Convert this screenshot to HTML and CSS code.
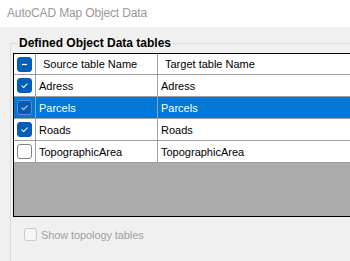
FILE: index.html
```html
<!DOCTYPE html>
<html lang="en">
<head>
  <meta charset="UTF-8">
  <title>AutoCAD Map Object Data</title>
  <link rel="stylesheet" href="styles.css">
</head>
<body>

  <div class="titlebar">AutoCAD Map Object Data</div>

  <fieldset class="group">
    <legend>Defined Object Data tables</legend>

    <div class="grid">
      <table>
        <thead>
          <tr>
            <th class="chk">
              <span class="box on">
                <svg viewBox="0 0 15 15"><path d="M4.5 7.5H10.5"/></svg>
              </span>
            </th>
            <th class="src">Source table Name</th>
            <th>Target table Name</th>
          </tr>
        </thead>
        <tbody>
          <tr>
            <td class="chk"><span class="box on"><svg viewBox="0 0 15 15"><path d="M4.2 7.6L6.5 9.9L10.9 5.3"/></svg></span></td>
            <td>Adress</td>
            <td>Adress</td>
          </tr>
          <tr class="sel">
            <td class="chk"><span class="box on"><svg viewBox="0 0 15 15"><path d="M4.2 7.6L6.5 9.9L10.9 5.3"/></svg></span></td>
            <td>Parcels</td>
            <td>Parcels</td>
          </tr>
          <tr>
            <td class="chk"><span class="box on"><svg viewBox="0 0 15 15"><path d="M4.2 7.6L6.5 9.9L10.9 5.3"/></svg></span></td>
            <td>Roads</td>
            <td>Roads</td>
          </tr>
          <tr>
            <td class="chk"><span class="box off"></span></td>
            <td>TopographicArea</td>
            <td>TopographicArea</td>
          </tr>
        </tbody>
      </table>
    </div>

    <label class="option disabled"><span class="box"></span>Show topology tables</label>
  </fieldset>

</body>
</html>
```

FILE: styles.css
```css
html, body {
  height: 100%;
  margin: 0;
}

body {
  background-color: #f0f0f0;
  font-family: "Liberation Sans", Arial, sans-serif;
  font-size: 11px;
  display: flex;
  flex-direction: column;
  overflow: hidden;
}

.titlebar {
  flex-shrink: 0;
  height: 27px;
  line-height: 27px;
  padding-left: 7px;
  background-color: #fff;
  color: #999;
  font-size: 12px;
  letter-spacing: -0.15px;
}

/* Group box */
.group {
  flex: 1;
  min-width: 0;
  margin: 9px 0 0 10px;
  padding: 3px 0 0 2px;
  border: 1px solid #dcdcdc;
  border-right: none;
  border-bottom: none;
}

.group legend {
  margin-left: 4px;
  padding: 0 2px;
  font-size: 12px;
  font-weight: bold;
  line-height: 14px;
  color: #000;
}

/* Data grid - runs on past the right edge of the window */
.grid {
  height: 162px;
  border: 1px solid #000;
  border-right: none;
  background-color: #ababab;
}

.grid table {
  width: 100%;
  table-layout: fixed;
  border-collapse: separate;
  border-spacing: 0;
}

.grid th, .grid td {
  padding: 0 0 0 3px;
  border-right: 1px solid #a0a0a0;
  border-bottom: 1px solid #a0a0a0;
  background-color: #fff;
  color: #000;
  text-align: left;
  font-weight: normal;
  white-space: nowrap;
}

.grid th:last-child, .grid td:last-child {
  border-right: none;
}

.grid th {
  height: 20px;
  padding-left: 7px;
}

.grid td {
  height: 21px;
}

.grid .chk {
  width: 21px;
  padding: 0;
}

.grid th.src {
  width: 114px;
}

.grid .sel td {
  background-color: #0078d7;
  color: #fff;
}

/* Check boxes */
.box {
  display: block;
  box-sizing: border-box;
  width: 15px;
  height: 15px;
  border-radius: 3px;
}

.grid .box {
  margin: 0 auto;
}

.box svg {
  display: block;
  width: 13px;
  height: 13px;
  fill: none;
  stroke: #fff;
  stroke-width: 1.2;
}

.box.on {
  background-color: #005fb8;
  border: 1px solid #005fb8;
}

.box.on svg path[d^="M4.5"] {
  stroke-width: 1.5;
}

.sel .box.on {
  background-color: #0d5bb0;
  border-color: #4c93dd;
}

.sel .box.on svg {
  stroke: #c9ddf3;
}

.box.off {
  background-color: #fff;
  border: 1px solid #868686;
}

.option {
  display: flex;
  align-items: center;
  gap: 4px;
  margin: 11px 0 0 11px;
  letter-spacing: -0.1px;
}

.option .box {
  width: 13px;
  height: 13px;
  border: 1px solid #c8c8c8;
  background-color: #f5f5f5;
}

.option.disabled {
  color: #a0a0a0;
}
```
